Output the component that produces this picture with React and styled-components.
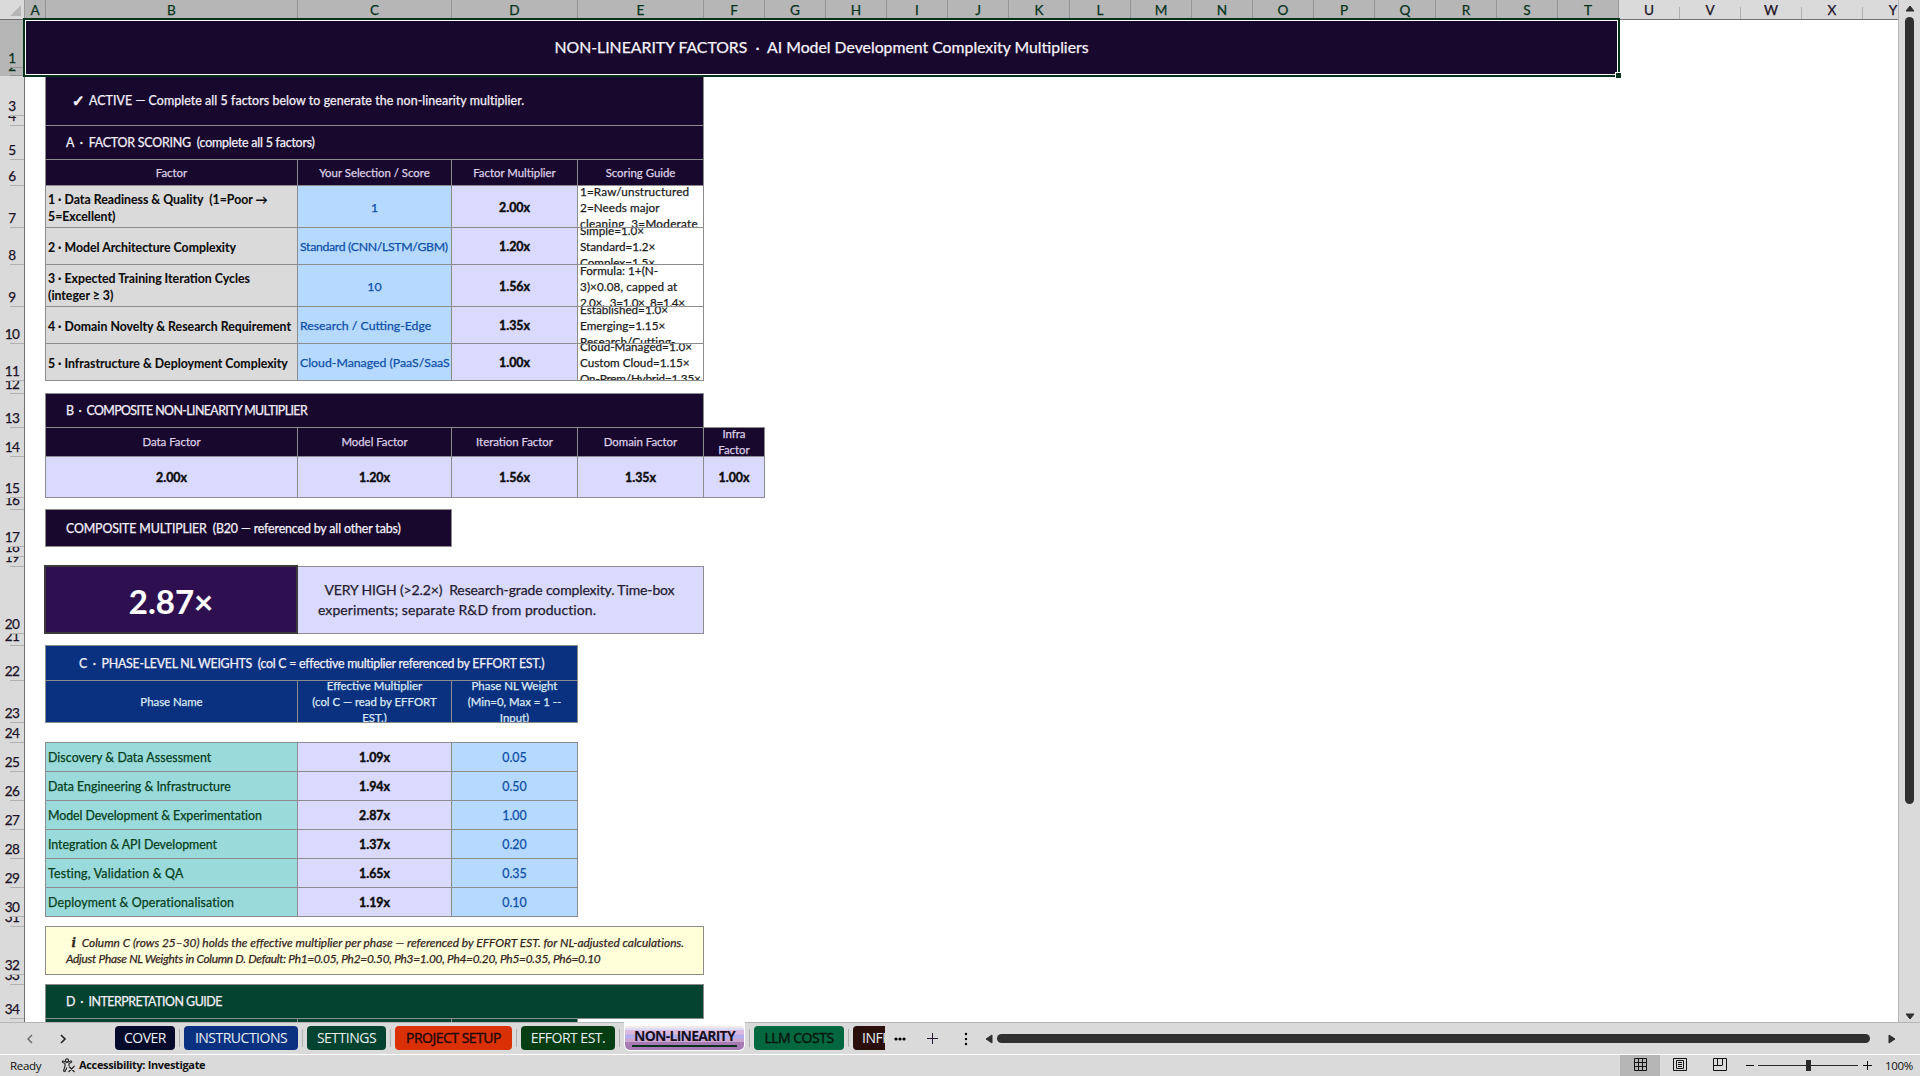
import React from 'react';
import styled, { createGlobalStyle } from 'styled-components';

const Global = createGlobalStyle`
  * { box-sizing: border-box; }
  html, body { margin: 0; padding: 0; }
  body { width: 1920px; height: 1076px; overflow: hidden; background: #dadada; font-family: Lato, Carlito, "Noto Sans", sans-serif; }
`;

const NAVY = '#19082d';
const BLUE = '#0a3180';
const GREEN = '#03432f';
const LILAC = '#dad9fe';
const SKY = '#b6daff';
const TEAL = '#9adada';
const GREY = '#dadada';

const Window = styled.div`
  width: 1920px;
  height: 1076px;
  display: flex;
  flex-direction: column;
  background: #dadada;
`;

const Work = styled.div`
  display: flex;
  height: 1022px;
`;

const Sheet = styled.div`
  width: 1899px;
  height: 1023px;
  overflow: hidden;
  border-right: 1px solid #b6b6b6;
  border-bottom: 1px solid #b6b6b6;
  background: #fff;
`;

const HeadRow = styled.div`
  display: flex;
  width: 1950px;
  height: 20px;
  background: #dadada;
  border-bottom: 1px solid #6f6f6f;
`;

const Corner = styled.div`
  width: 25px;
  height: 19px;
  flex: none;
  display: flex;
  border-right: 1px solid #9a9a9a;
`;

const ColHead = styled.div`
  flex: none;
  width: ${(p) => p.$w}px;
  height: 19px;
  line-height: 20px;
  text-align: center;
  font-size: 13.6px;
  -webkit-text-stroke: 0.25px;
  color: ${(p) => (p.$on ? '#06331c' : '#1b1226')};
  background: ${(p) => (p.$on ? '#b6b6b6' : '#dadada')};
  border-right: 1px solid transparent;
  border-image: linear-gradient(${(p) => (p.$on ? '#949494, #949494' : '#dadada 40%, #b0b0b0 40%')}) 1;
`;

const Body = styled.div`
  display: flex;
`;

const RowHeads = styled.div`
  width: 25px;
  flex: none;
  border-right: 1px solid #6f6f6f;
  background: #dadada;
`;

const RowHead = styled.div`
  height: ${(p) => p.$h}px;
  display: flex;
  flex-direction: column;
  justify-content: flex-end;
  overflow: hidden;
  text-align: center;
  font-size: 13.6px;
  letter-spacing: -0.6px;
  -webkit-text-stroke: 0.25px;
  line-height: 20px;
  color: ${(p) => (p.$on ? '#06331c' : '#1b1226')};
  background: linear-gradient(to right, transparent 10px, ${(p) => (p.$on ? '#949494' : '#b0b0b0')} 10px) bottom / 100% 1px no-repeat
    ${(p) => (p.$on ? '#b6b6b6' : '#dadada')};
`;

const Grid = styled.div`
  display: grid;
  width: 1594px;
  flex: none;
  grid-template-columns: 21px 252px 154px 126px 126px 61px 854px;
  grid-template-rows: ${(p) => p.$rows.map((r) => r + 'px').join(' ')};
`;

const Cell = styled.div`
  grid-row: ${(p) => p.$r};
  grid-column: ${(p) => p.$c};
  display: flex;
  align-items: center;
  justify-content: ${(p) => (p.$left ? 'flex-start' : 'center')};
  text-align: ${(p) => (p.$left ? 'left' : 'center')};
  overflow: hidden;
  margin-left: ${(p) => (p.$thick ? -2 : -1)}px;
  margin-top: ${(p) => (p.$thick ? -2 : -1)}px;
  padding: ${(p) => p.$dy || 0}px 2px 0 ${(p) => p.$pad ?? 2}px;
  white-space: pre;
  border: ${(p) => (p.$thick ? 2 : 1)}px solid ${(p) => p.$line || '#8c8c8c'};
  background: ${(p) => p.$bg || '#fff'};
  color: ${(p) => p.$fg || '#f4f0fa'};
  font-size: ${(p) => p.$size || 12.4}px;
  font-weight: ${(p) => (p.$bold ? 700 : 400)};
  -webkit-text-stroke: ${(p) => (p.$num ? 0.4 : p.$bold ? 0.1 : 0.25)}px;
  font-style: ${(p) => (p.$italic ? 'italic' : 'normal')};
  line-height: ${(p) => p.$lh || 16}px;
  letter-spacing: ${(p) => p.$ls || 0}px;
`;

const Line = styled.span`
  display: block;
  letter-spacing: ${(p) => p.$ls || 0}px;
`;

const Check = styled.span`
  width: 17px;
  font: 700 15px/16px "DejaVu Sans", sans-serif;
  -webkit-text-stroke: 1px;
`;

const Info = styled.b`
  font: italic 700 12px/12px "DejaVu Serif", serif;
`;

const Title = styled.div`
  position: relative;
  grid-row: 1 / 3;
  grid-column: 1 / 8;
  display: flex;
  align-items: center;
  justify-content: center;
  margin: -2px -1px -1px -2px;
  padding-bottom: 3px;
  border: 2px solid #06331c;
  box-shadow: inset 0 0 0 1px #fff;
  background: ${NAVY};
  color: #f6f2fb;
  font-size: 15.8px;
  -webkit-text-stroke: 0.25px;
  white-space: pre;
`;

const FillHandle = styled.i`
  position: absolute;
  right: -3px;
  bottom: -3px;
  width: 5px;
  height: 5px;
  background: #06331c;
  box-shadow: 0 0 0 1px #fff;
`;

const VScroll = styled.div`
  width: 21px;
  display: flex;
  flex-direction: column;
  align-items: center;
  padding-top: 5px;
`;

const VThumb = styled.div`
  width: 9px;
  height: 787px;
  margin: 5px 0 209px;
  border-radius: 5px;
  background: #2f2f2f;
`;

const TabBar = styled.div`
  display: flex;
  align-items: flex-start;
  height: 32px;
  border-top: 1px solid #b6b6b6;
  position: relative;
`;

const NavArrows = styled.div`
  display: flex;
  align-items: center;
  width: 115px;
  height: 31px;
  padding-left: 26px;
  gap: 25px;
`;

const Tab = styled.div`
  flex: none;
  width: ${(p) => p.$w}px;
  height: 24px;
  margin: 3px ${(p) => p.$gap ?? 9}px 0 0;
  border-radius: 4px;
  background: ${(p) => p.$bg};
  color: ${(p) => p.$fg || '#e9f0f4'};
  font: 14px/24px "Open Sans", "Noto Sans", sans-serif;
  letter-spacing: ${(p) => p.$ls ?? -0.5}px;
  -webkit-text-stroke: ${(p) => (p.$heavy ? '0.4px' : '0')};
  text-align: center;
  white-space: nowrap;
  overflow: hidden;
  ${(p) => p.$cut && 'border-radius: 4px 0 0 4px; text-align: left; padding-left: 9px;'}
`;

const ActiveWrap = styled.div`
  flex: none;
  width: 121px;
  height: 29px;
  margin: -1px 9px 0 0;
  padding: 4px 1px 1px;
  border-radius: 0 0 6px 6px;
  background: #fff;
`;

const ActiveTab = styled.div`
  height: 24px;
  padding: 0 7px;
  background: linear-gradient(#f3e9e6 0 2px, #dcdcf8 2px 4px, #dcb9dc 4px 8px, #b3aef0 9px 12px, #cba7cf 13px 16px, #a67ab2 16px);
  border-radius: 3px 3px 5px 5px;
  color: #171020;
  font: 700 14px/19px "Open Sans", "Noto Sans", sans-serif;
  letter-spacing: -0.75px;
  text-align: center;
  white-space: nowrap;
`;

const Underline = styled.div`
  height: 2px;
  background: #06331c;
`;

const Sep = styled.i`
  flex: none;
  width: 1px;
  height: 18px;
  margin: 6px 4px 0 -5px;
  background: #b0b0b0;
`;

const Tools = styled.div`
  display: flex;
  align-items: center;
  height: 31px;
`;

const HThumb = styled.div`
  width: 873px;
  height: 9px;
  margin: 0 18px 0 4px;
  border-radius: 5px;
  background: #2f2f2f;
`;

const Status = styled.div`
  display: flex;
  align-items: center;
  justify-content: space-between;
  height: 22px;
  border-top: 1px solid #fff;
  font: 11.5px "Open Sans", "Noto Sans", sans-serif;
  letter-spacing: -0.3px;
  color: #111;
`;

const Side = styled.div`
  display: flex;
  align-items: center;
  height: 21px;
  padding-left: ${(p) => p.$pl || 0}px;
`;

const Ready = styled.span`
  width: 51px;
`;

const Access = styled.b`
  margin-left: 3px;
  padding-bottom: 2px;
  font-size: 11px;
  letter-spacing: -0.34px;
`;

const View = styled.div`
  display: flex;
  align-items: center;
  justify-content: center;
  width: 40px;
  height: 21px;
  padding-bottom: 2px;
  background: ${(p) => (p.$on ? '#b6b6b6' : 'transparent')};
`;

const Track = styled.div`
  display: flex;
  align-items: center;
  justify-content: center;
  width: 100px;
  height: 11px;
  margin: 0 5px 0 3px;
  background: linear-gradient(#2a2a2a, #2a2a2a) center / 100% 1px no-repeat;
`;

const Thumb = styled.i`
  width: 5px;
  height: 11px;
  background: #2a2a2a;
`;

const Percent = styled.span`
  width: 48px;
  padding-left: 13px;
`;

const ROWS = [48, 8, 40, 10, 34, 26, 42, 37, 42, 37, 37, 13, 34, 29, 41, 12, 37, 10, 10, 67, 12, 35, 42, 20, 29, 29, 29, 29, 29, 29, 10, 48, 10, 34, 32];
const COLS = [['A', 21], ['B', 252], ['C', 154], ['D', 126], ['E', 126], ...'FGHIJKLMNOPQRSTUVWXY'.split('').map((c) => [c, 61])];

const FACTORS = [
  ['1 · Data Readiness & Quality  (1=Poor →\n5=Excellent)', '1', '2.00x', [['1=Raw/unstructured', 0.15], ['2=Needs major', 0.1], ['cleaning  3=Moderate', 0.3]]],
  ['2 · Model Architecture Complexity', 'Standard (CNN/LSTM/GBM)', '1.20x', [['Simple=1.0×'], ['Standard=1.2×'], ['Complex=1.5×']]],
  ['3 · Expected Training Iteration Cycles\n(integer ≥ 3)', '10', '1.56x', [['Formula: 1+(N-', 0.05], ['3)×0.08, capped at', 0.1], ['2.0×.  3=1.0×  8=1.4×', -0.3]]],
  ['4 · Domain Novelty & Research Requirement', 'Research / Cutting-Edge', '1.35x', [['Established=1.0×'], ['Emerging=1.15×', 0.05], ['Research/Cutting-', 0.1]]],
  ['5 · Infrastructure & Deployment Complexity', 'Cloud-Managed (PaaS/SaaS', '1.00x', [['Cloud-Managed=1.0×'], ['Custom Cloud=1.15×'], ['On-Prem/Hybrid=1.35×', -0.15]]],
];

const COMPOSITE = [['Data Factor', '2.00x'], ['Model Factor', '1.20x'], ['Iteration Factor', '1.56x'], ['Domain Factor', '1.35x'], ['Infra\nFactor', '1.00x']];

const PHASES = [
  ['Discovery & Data Assessment', '1.09x', '0.05', 0.05],
  ['Data Engineering & Infrastructure', '1.94x', '0.50', 0],
  ['Model Development & Experimentation', '2.87x', '1.00', -0.07],
  ['Integration & API Development', '1.37x', '0.20', -0.04],
  ['Testing, Validation & QA', '1.65x', '0.35', 0.18],
  ['Deployment & Operationalisation', '1.19x', '0.10', 0.13],
];

function Tri({ d, w, h }) {
  return (
    <svg width={w} height={h}>
      <path d={d} fill="#2f2f2f" stroke="#2f2f2f" strokeLinejoin="round" />
    </svg>
  );
}

function SheetGrid() {
  return (
    <Grid $rows={ROWS}>
      <Cell $r="3 / 5" $c="2 / 6" $left $pad={26} $bg={NAVY} $ls={0.07} $dy={1}><Check>✓</Check>ACTIVE — Complete all 5 factors below to generate the non-linearity multiplier.</Cell>
      <Cell $r={5} $c="2 / 6" $left $pad={20} $bg={NAVY} $ls={-0.2} $dy={1}>A  ·  FACTOR SCORING  (complete all 5 factors)</Cell>
      {['Factor', 'Your Selection / Score', 'Factor Multiplier', 'Scoring Guide'].map((t, i) => (
        <Cell key={t} $r={6} $c={i + 2} $bg={NAVY} $fg="#dccfe6" $size={11.4} $dy={1}>{t}</Cell>
      ))}
      {FACTORS.map(([name, pick, mult, guide], i) => (
        <React.Fragment key={name}>
          <Cell $r={7 + i} $c={2} $left $bold $bg={GREY} $fg="#0c0c0c" $size={12.3} $lh={17} $dy={2}>{name}</Cell>
          <Cell $r={7 + i} $c={3} $left={pick.length > 2} $bg={SKY} $fg="#0f4fa8" $size={12.3} $dy={2} $ls={pick.includes('CNN') ? -0.33 : 0}>{pick}</Cell>
          <Cell $r={7 + i} $c={4} $bold $num $bg={LILAC} $fg="#0c0c0c" $dy={2}>{mult}</Cell>
          <Cell $r={7 + i} $c={5} $left $fg="#1c1c1c" $size={11.7}>
            <div>{guide.map(([t, ls]) => <Line key={t} $ls={ls}>{t}</Line>)}</div>
          </Cell>
        </React.Fragment>
      ))}
      <Cell $r={13} $c="2 / 6" $left $pad={20} $bg={NAVY} $ls={-0.59} $dy={1}>B  ·  COMPOSITE NON-LINEARITY MULTIPLIER</Cell>
      {COMPOSITE.map(([t, v], i) => (
        <React.Fragment key={t}>
          <Cell $r={14} $c={i + 2} $bg={NAVY} $fg="#dccfe6" $size={11.4}>{t}</Cell>
          <Cell $r={15} $c={i + 2} $bold $num $bg={LILAC} $fg="#0c0c0c" $dy={2}>{v}</Cell>
        </React.Fragment>
      ))}
      <Cell $r={17} $c="2 / 4" $left $pad={20} $bg={NAVY} $ls={-0.14} $dy={1}>COMPOSITE MULTIPLIER  (B20 — referenced by all other tabs)</Cell>
      <Cell $r={20} $c="3 / 6" $left $pad={20} $bg={LILAC} $fg="#241c30" $size={14} $lh={20}>
        <div>
          <Line $ls={-0.13}>{'  VERY HIGH (>2.2×)  Research-grade complexity. Time-box'}</Line>
          <Line $ls={0.07}>experiments; separate R&D from production.</Line>
        </div>
      </Cell>
      <Cell $r={20} $c={2} $bold $thick $bg="#2e0f50" $fg="#fff" $size={33} $line="#3a3a3a" $dy={3}>2.87×</Cell>
      <Cell $r={22} $c="2 / 5" $left $pad={33} $bg={BLUE} $ls={-0.27} $dy={1}>C  ·  PHASE-LEVEL NL WEIGHTS  (col C = effective multiplier referenced by EFFORT EST.)</Cell>
      {['Phase Name', 'Effective Multiplier\n(col C — read by EFFORT\nEST.)', 'Phase NL Weight\n(Min=0, Max = 1 --\nInput)'].map((t, i) => (
        <Cell key={t} $r={23} $c={i + 2} $bg={BLUE} $fg="#dbe9f5" $size={11.4}>{t}</Cell>
      ))}
      {PHASES.map(([name, mult, weight, ls], i) => (
        <React.Fragment key={name}>
          <Cell $r={25 + i} $c={2} $left $bg={TEAL} $fg="#06401c" $ls={ls} $dy={2}>{name}</Cell>
          <Cell $r={25 + i} $c={3} $bold $num $bg={LILAC} $fg="#0c0c0c" $dy={2}>{mult}</Cell>
          <Cell $r={25 + i} $c={4} $bg={SKY} $fg="#0f4fa8" $dy={2}>{weight}</Cell>
        </React.Fragment>
      ))}
      <Cell $r={32} $c="2 / 6" $left $italic $pad={20} $bg="#ffffda" $fg="#33241c" $size={11.9}>
        <div>
          <Line $ls={0.01}>{'  '}<Info>i</Info>{'  Column C (rows 25–30) holds the effective multiplier per phase — referenced by EFFORT EST. for NL-adjusted calculations.'}</Line>
          <Line $ls={-0.27}>Adjust Phase NL Weights in Column D. Default: Ph1=0.05, Ph2=0.50, Ph3=1.00, Ph4=0.20, Ph5=0.35, Ph6=0.10</Line>
        </div>
      </Cell>
      <Cell $r={34} $c="2 / 6" $left $pad={20} $bg={GREEN} $ls={-0.48} $dy={1}>D  ·  INTERPRETATION GUIDE</Cell>
      {[2, 3, 4].map((c) => <Cell key={c} $r={35} $c={c} $bg={GREEN} />)}
      <Title>NON-LINEARITY FACTORS  ·  AI Model Development Complexity Multipliers<FillHandle /></Title>
    </Grid>
  );
}

export default function App() {
  return (
    <Window>
      <Global />
      <Work>
        <Sheet>
          <HeadRow>
            <Corner><svg width="24" height="19"><path d="M21 5V16H10Z" fill="#b6b6b6" /></svg></Corner>
            {COLS.map(([c, w], i) => <ColHead key={c} $w={w} $on={i < 20}>{c}</ColHead>)}
          </HeadRow>
          <Body>
            <RowHeads>
              {ROWS.map((h, i) => <RowHead key={i} $h={h} $on={i < 2}>{i < 34 ? i + 1 : ''}</RowHead>)}
            </RowHeads>
            <SheetGrid />
          </Body>
        </Sheet>
        <VScroll>
          <Tri w={10} h={7} d="M5 1L9 6H1Z" />
          <VThumb />
          <Tri w={10} h={7} d="M5 6L9 1H1Z" />
        </VScroll>
      </Work>
      <TabBar>
        <NavArrows>
          <svg width="8" height="10" fill="none" stroke="#666" strokeWidth="1.4"><path d="M6 1L2 5L6 9" /></svg>
          <svg width="8" height="10" fill="none" stroke="#222" strokeWidth="1.6"><path d="M2 1L6 5L2 9" /></svg>
        </NavArrows>
        <Tab $w={60} $bg="#05092a">COVER</Tab><Sep />
        <Tab $w={114} $bg="#0a3180">INSTRUCTIONS</Tab><Sep />
        <Tab $w={79} $bg="#03432f">SETTINGS</Tab><Sep />
        <Tab $w={117} $bg="#da3006" $fg="#240a06" $heavy>PROJECT SETUP</Tab><Sep />
        <Tab $w={94} $bg="#063d12">EFFORT EST.</Tab><Sep />
        <ActiveWrap><ActiveTab>NON-LINEARITY<Underline /></ActiveTab></ActiveWrap><Sep />
        <Tab $w={90} $bg="#03673f" $fg="#06150e" $heavy>LLM COSTS</Tab><Sep />
        <Tab $w={32} $bg="#2a0e0c" $cut>INFR</Tab>
        <Tools>
          <svg width="12" height="4"><circle cx="2" cy="2" r="1.6" /><circle cx="6" cy="2" r="1.6" /><circle cx="10" cy="2" r="1.6" /></svg>
          <svg width="58" height="20" stroke="#2a1838"><path d="M26.5 4V15M21 9.5H32" /></svg>
          <svg width="21" height="14"><circle cx="2" cy="2" r="1.2" /><circle cx="2" cy="7" r="1.2" /><circle cx="2" cy="12" r="1.2" /></svg>
          <Tri w={8} h={10} d="M1 5L7 1V9Z" />
          <HThumb />
          <Tri w={8} h={10} d="M7 5L1 1V9Z" />
        </Tools>
      </TabBar>
      <Status>
        <Side $pl={10}>
          <Ready>Ready</Ready>
          <svg width="15" height="15" viewBox="0 0 15 15" fill="none" stroke="#222" strokeWidth="1.1">
            <circle cx="6" cy="2.5" r="1.6" /><path d="M1 4L4 5.5V8L2.5 13L4 13.5L6 9.5M11 4L8 5.5V8M1 4L2 2.8L6 4.5L10 2.8L11 4M8 8.5L13.5 14M13.5 8L7.5 14" />
          </svg>
          <Access>Accessibility: Investigate</Access>
        </Side>
        <Side>
          <View $on><svg width="13" height="13" fill="none" stroke="#111"><path d="M.5 .5H12.5V12.5H.5ZM4.5 0V13M8.5 0V13M0 4.5H13M0 8.5H13" /></svg></View>
          <View><svg width="14" height="13" fill="none" stroke="#111"><path d="M.5 .5H13.5V12.5H.5ZM3.5 2.5H10.5V10.5H3.5ZM5 4.5H9M5 6.5H9M5 8.5H9" /></svg></View>
          <View><svg width="14" height="13" fill="none" stroke="#111"><path d="M.5 .5H13.5V12.5H.5ZM4.5 0V7M9.5 0V7.5M0 7.5H9" /></svg></View>
          <svg width="15" height="11" stroke="#111"><path d="M6 5.5H14" /></svg>
          <Track><Thumb /></Track>
          <svg width="9" height="11" stroke="#111"><path d="M0 5.5H9M4.5 1V10" /></svg>
          <Percent>100%</Percent>
        </Side>
      </Status>
    </Window>
  );
}
